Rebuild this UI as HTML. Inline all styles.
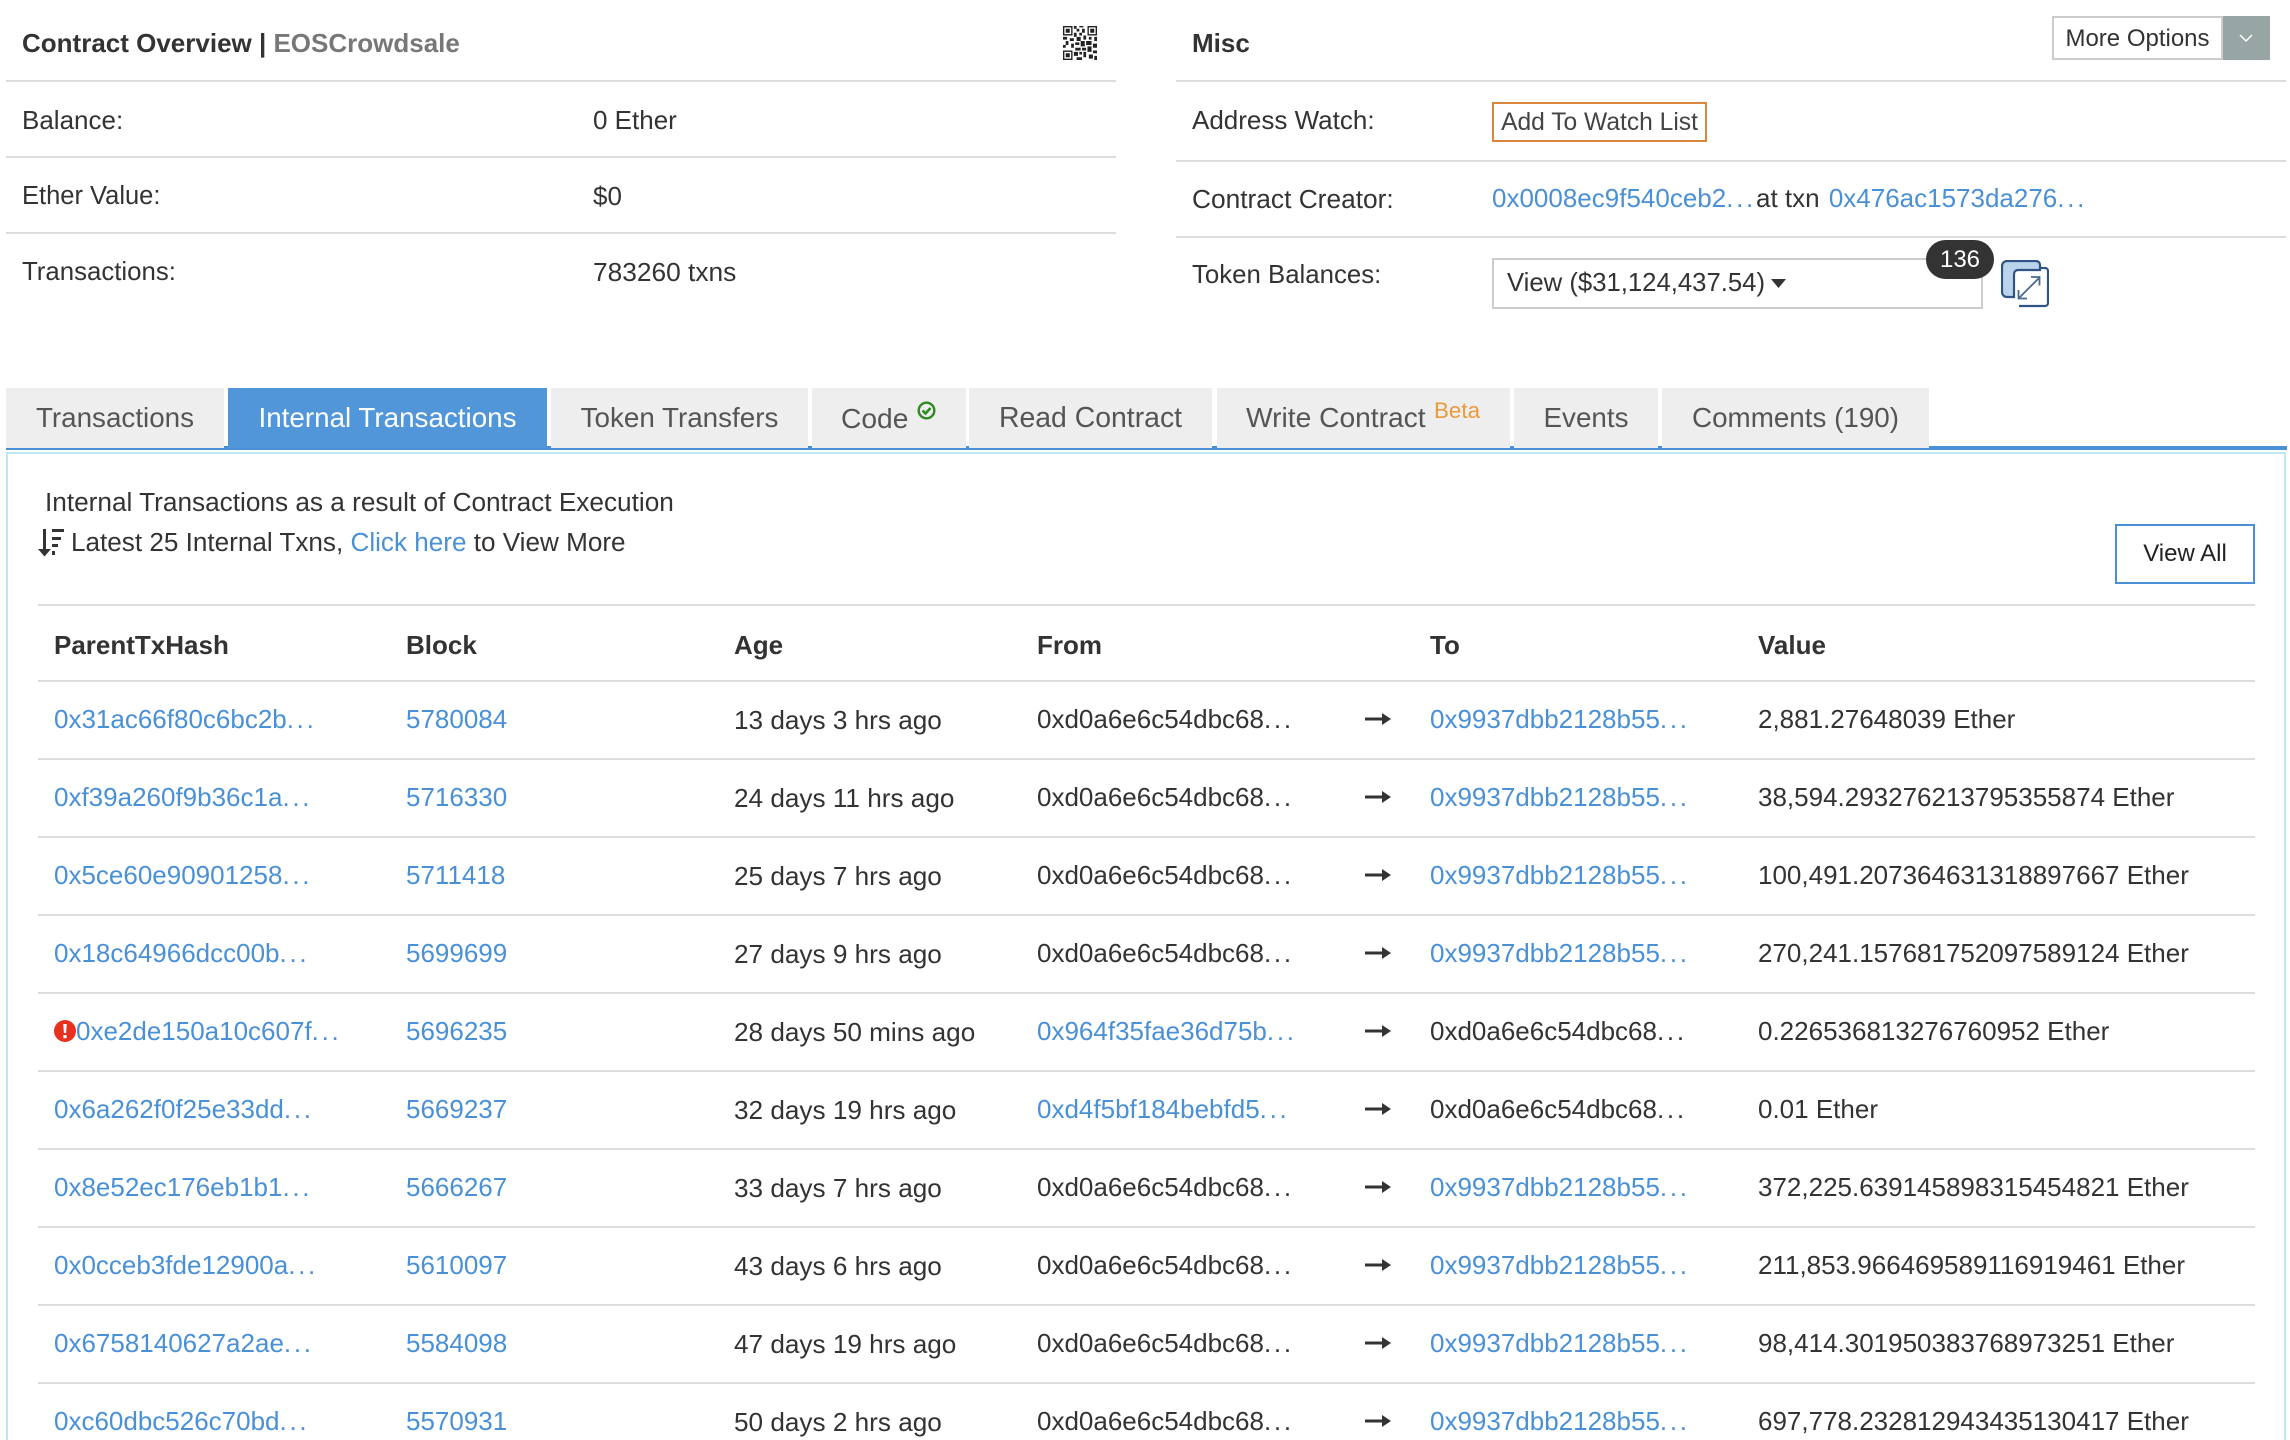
<!DOCTYPE html>
<html><head><meta charset="utf-8"><style>
html,body{margin:0;padding:0;background:#fff;height:1440px;overflow:hidden}
body{width:2290px;position:relative;font-family:"Liberation Sans",sans-serif;font-size:26px;color:#333}
.t,.r span,.r a{position:absolute;white-space:nowrap;line-height:30px}
a{color:#4a90d6;text-decoration:none}
i{font-style:normal;letter-spacing:2.7px}
.l{position:absolute;height:2px;background:#ddd}
.b{font-weight:bold}
.tab{position:absolute;top:388px;height:60px;background:#eee;color:#555;font-size:27.8px;line-height:60px;text-align:center;white-space:nowrap}
.r{position:absolute;left:0;width:2290px;height:78px}
.a{left:54px;top:24px}.k{left:406px;top:24px}.g{left:734px;top:25px;font-size:26.15px}.f{left:1037px;top:24px}.o{left:1430px;top:24px}.v{left:1758px;top:24px}
.r svg{position:absolute;left:1365px;top:31px}
.r .ln{position:absolute;left:38px;top:0;width:2217px;height:2px;background:#ddd}
</style></head><body>

<div class="t b" style="left:22px;top:28px">Contract Overview | <span style="color:#777">EOSCrowdsale</span></div>
<svg style="position:absolute;left:1063px;top:26px;filter:blur(.35px)" width="34" height="34" viewBox="0 0 25 25" fill="#222">
<path d="M0 0h7v7H0zM1 1v5h5V1zM2 2h3v3H2z" fill-rule="evenodd"/><path d="M18 0h7v7h-7zM19 1v5h5V1zM20 2h3v3h-3z" fill-rule="evenodd"/><path d="M0 18h7v7H0zM1 19v5h5v-5zM2 20h3v3H2z" fill-rule="evenodd"/>
<path d="M8 0h2v2H8zM12 0h3v1h-3zM10 2h2v2h-2zM14 2h2v3h-2zM8 5h2v3H8zM12 5h2v2h-2zM0 8h3v2H0zM5 9h3v2H5zM10 8h3v3h-3zM15 7h2v3h-2zM19 8h2v2h-2zM23 8h2v3h-2zM2 11h2v3H2zM0 14h2v2H0zM6 13h2v3H6zM9 12h3v2H9zM13 11h3v4h-3zM17 11h4v3h-4zM22 13h3v3h-3zM9 16h4v2H9zM14 16h3v2h-3zM18 15h3v4h-3zM8 19h3v3H8zM12 19h2v2h-2zM15 19h2v4h-2zM22 18h3v2h-3zM19 21h3v3h-3zM10 23h4v2h-4zM23 22h2v3h-2z"/></svg>
<div class="l" style="left:6px;top:80px;width:1110px"></div>
<div class="t" style="left:22px;top:105px">Balance:</div><div class="t" style="left:593px;top:105px">0 Ether</div>
<div class="l" style="left:6px;top:156px;width:1110px"></div>
<div class="t" style="left:22px;top:181px;font-size:25.5px">Ether Value:</div><div class="t" style="left:593px;top:181px">$0</div>
<div class="l" style="left:6px;top:232px;width:1110px"></div>
<div class="t" style="left:22px;top:257px;font-size:25.8px">Transactions:</div><div class="t" style="left:593px;top:257px;font-size:26.3px">783260 txns</div>

<div class="t b" style="left:1192px;top:28px">Misc</div>
<div style="position:absolute;left:2052px;top:16px;width:167px;height:40px;border:2px solid #ccc;font-size:24px;line-height:41px;text-align:center;white-space:nowrap">More Options</div>
<div style="position:absolute;left:2223px;top:16px;width:47px;height:44px;background:#98a5a5"></div>
<svg style="position:absolute;left:2239px;top:33px" width="14" height="10" viewBox="0 0 14 10"><path d="M1 2l6 6 6-6" fill="none" stroke="#fff" stroke-width="1.5"/></svg>
<div class="l" style="left:1176px;top:80px;width:1110px"></div>
<div class="t" style="left:1192px;top:105px">Address Watch:</div>
<div style="position:absolute;left:1492px;top:102px;width:211px;height:36px;border:2px solid #d9853c;font-size:24.6px;line-height:37px;text-align:center;white-space:nowrap;color:#444">Add To Watch List</div>
<div class="l" style="left:1176px;top:160px;width:1110px"></div>
<div class="t" style="left:1192px;top:184px;font-size:26.3px">Contract Creator:</div>
<div class="t" style="left:1492px;top:183px"><a>0x0008ec9f540ceb2<i>...</i></a>at txn <a style="margin-left:2px">0x476ac1573da276<i>...</i></a></div>
<div class="l" style="left:1176px;top:236px;width:1110px"></div>
<div class="t" style="left:1192px;top:260px;font-size:25.8px">Token Balances:</div>
<div style="position:absolute;left:1492px;top:258px;width:487px;height:47px;border:2px solid #ccc"></div>
<div class="t" style="left:1507px;top:268px;font-size:25.7px">View ($31,124,437.54)</div>
<svg style="position:absolute;left:1771px;top:279px" width="15" height="9"><path d="M0 0h15L7.5 9z" fill="#333"/></svg>
<div style="position:absolute;left:1926px;top:240px;width:68px;height:39px;border-radius:20px;background:#333;color:#fff;font-size:24px;line-height:39px;text-align:center">136</div>
<svg style="position:absolute;left:2001px;top:260px" width="48" height="48" viewBox="0 0 48 48">
<path d="M6 1h29a4 4 0 0 1 4 4v5H17a4 4 0 0 0-4 4v23H6a5 5 0 0 1-5-5V6a5 5 0 0 1 5-5z" fill="#bcd3ec" stroke="#2f5587" stroke-width="2.200"/>
<path d="M39 8h5a3 3 0 0 1 3 3v32a3 3 0 0 1-3 3H18" fill="none" stroke="#2f5587" stroke-width="2.200"/>
<path d="M18 38L38 18M30 17h8.500v8.500M17.500 30v8.500h8.500" fill="none" stroke="#4a6a90" stroke-width="1.800"/></svg>

<div style="position:absolute;left:6px;top:452px;width:2276px;height:986px;border:2px solid #bce8f1;border-bottom:0"></div>
<div style="position:absolute;left:6px;top:446px;width:2281px;height:4px;background:#4a90d6"></div>
<div class="tab" style="left:6px;width:218px">Transactions</div>
<div class="tab" style="left:228px;width:319px;background:#5096d8;color:#fff">Internal Transactions</div>
<div class="tab" style="left:551px;width:257px">Token Transfers</div>
<div class="tab" style="left:812px;width:154px;text-align:left;text-indent:29px;font-size:28.2px">Code</div>
<svg style="position:absolute;left:917px;top:401px" width="19" height="19" viewBox="0 0 19 19"><circle cx="9.500" cy="9.500" r="7.800" fill="none" stroke="#2f8a22" stroke-width="2.400"/><path d="M5.500 9.500l3 3 5-5.500" fill="none" stroke="#2f8a22" stroke-width="2.600"/></svg>
<div class="tab" style="left:969px;width:243px;font-size:28.4px">Read Contract</div>
<div class="tab" style="left:1217px;width:293px;text-align:left;text-indent:29px;font-size:28.2px;line-height:59px">Write Contract</div>
<div class="t" style="left:1434px;top:396px;font-size:22.4px;color:#e89a3c">Beta</div>
<div class="tab" style="left:1514px;width:144px">Events</div>
<div class="tab" style="left:1662px;width:267px">Comments (190)</div>

<div class="t" style="left:45px;top:487px;font-size:26.2px">Internal Transactions as a result of Contract Execution</div>
<svg style="position:absolute;left:38px;top:529px" width="27" height="28" viewBox="0 0 27 28" fill="#333"><path d="M5 0h3v20h5l-6.500 7.500L0 20h5z"/><path d="M14 0h12v3H14zM14 8h9v3h-9zM14 15h6v3h-6zM14 22h3v4h-3z"/></svg>
<div class="t" style="left:71px;top:527px;font-size:26.1px">Latest 25 Internal Txns, <a>Click here</a> to View More</div>
<div style="position:absolute;left:2115px;top:524px;width:136px;height:56px;border:2px solid #4a90d6;font-size:24px;line-height:56px;text-align:center;color:#222">View All</div>

<div class="l" style="left:38px;top:604px;width:2217px"></div>
<div class="t b" style="left:54px;top:630px">ParentTxHash</div>
<div class="t b" style="left:406px;top:630px">Block</div>
<div class="t b" style="left:734px;top:630px">Age</div>
<div class="t b" style="left:1037px;top:630px">From</div>
<div class="t b" style="left:1430px;top:630px">To</div>
<div class="t b" style="left:1758px;top:630px">Value</div>

<div class="r" style="top:680px"><div class="ln"></div><a class="a">0x31ac66f80c6bc2b<i>...</i></a><a class="k">5780084</a><span class="g">13 days 3 hrs ago</span><span class="f">0xd0a6e6c54dbc68<i>...</i></span><svg width="26" height="16" viewBox="0 0 26 16"><path d="M0 6.500h17V2l9 6-9 6V9.500H0z" fill="#333"/></svg><a class="o">0x9937dbb2128b55<i>...</i></a><span class="v">2,881.27648039 Ether</span></div>
<div class="r" style="top:758px"><div class="ln"></div><a class="a">0xf39a260f9b36c1a<i>...</i></a><a class="k">5716330</a><span class="g">24 days 11 hrs ago</span><span class="f">0xd0a6e6c54dbc68<i>...</i></span><svg width="26" height="16" viewBox="0 0 26 16"><path d="M0 6.500h17V2l9 6-9 6V9.500H0z" fill="#333"/></svg><a class="o">0x9937dbb2128b55<i>...</i></a><span class="v">38,594.293276213795355874 Ether</span></div>
<div class="r" style="top:836px"><div class="ln"></div><a class="a">0x5ce60e90901258<i>...</i></a><a class="k">5711418</a><span class="g">25 days 7 hrs ago</span><span class="f">0xd0a6e6c54dbc68<i>...</i></span><svg width="26" height="16" viewBox="0 0 26 16"><path d="M0 6.500h17V2l9 6-9 6V9.500H0z" fill="#333"/></svg><a class="o">0x9937dbb2128b55<i>...</i></a><span class="v">100,491.207364631318897667 Ether</span></div>
<div class="r" style="top:914px"><div class="ln"></div><a class="a">0x18c64966dcc00b<i>...</i></a><a class="k">5699699</a><span class="g">27 days 9 hrs ago</span><span class="f">0xd0a6e6c54dbc68<i>...</i></span><svg width="26" height="16" viewBox="0 0 26 16"><path d="M0 6.500h17V2l9 6-9 6V9.500H0z" fill="#333"/></svg><a class="o">0x9937dbb2128b55<i>...</i></a><span class="v">270,241.157681752097589124 Ether</span></div>
<div class="r" style="top:992px"><div class="ln"></div><svg style="left:54px;top:28px" width="22" height="22" viewBox="0 0 22 22"><circle cx="11" cy="11" r="11" fill="#e8301f"/><path d="M9.300 4h3.400l-.6 9H9.900zM9.400 15h3.200v3.200H9.400z" fill="#fff"/></svg><a class="a" style="left:76px">0xe2de150a10c607f<i>...</i></a><a class="k">5696235</a><span class="g">28 days 50 mins ago</span><a class="f">0x964f35fae36d75b<i>...</i></a><svg width="26" height="16" viewBox="0 0 26 16"><path d="M0 6.500h17V2l9 6-9 6V9.500H0z" fill="#333"/></svg><span class="o">0xd0a6e6c54dbc68<i>...</i></span><span class="v">0.226536813276760952 Ether</span></div>
<div class="r" style="top:1070px"><div class="ln"></div><a class="a">0x6a262f0f25e33dd<i>...</i></a><a class="k">5669237</a><span class="g">32 days 19 hrs ago</span><a class="f">0xd4f5bf184bebfd5<i>...</i></a><svg width="26" height="16" viewBox="0 0 26 16"><path d="M0 6.500h17V2l9 6-9 6V9.500H0z" fill="#333"/></svg><span class="o">0xd0a6e6c54dbc68<i>...</i></span><span class="v">0.01 Ether</span></div>
<div class="r" style="top:1148px"><div class="ln"></div><a class="a">0x8e52ec176eb1b1<i>...</i></a><a class="k">5666267</a><span class="g">33 days 7 hrs ago</span><span class="f">0xd0a6e6c54dbc68<i>...</i></span><svg width="26" height="16" viewBox="0 0 26 16"><path d="M0 6.500h17V2l9 6-9 6V9.500H0z" fill="#333"/></svg><a class="o">0x9937dbb2128b55<i>...</i></a><span class="v">372,225.639145898315454821 Ether</span></div>
<div class="r" style="top:1226px"><div class="ln"></div><a class="a">0x0cceb3fde12900a<i>...</i></a><a class="k">5610097</a><span class="g">43 days 6 hrs ago</span><span class="f">0xd0a6e6c54dbc68<i>...</i></span><svg width="26" height="16" viewBox="0 0 26 16"><path d="M0 6.500h17V2l9 6-9 6V9.500H0z" fill="#333"/></svg><a class="o">0x9937dbb2128b55<i>...</i></a><span class="v">211,853.966469589116919461 Ether</span></div>
<div class="r" style="top:1304px"><div class="ln"></div><a class="a">0x6758140627a2ae<i>...</i></a><a class="k">5584098</a><span class="g">47 days 19 hrs ago</span><span class="f">0xd0a6e6c54dbc68<i>...</i></span><svg width="26" height="16" viewBox="0 0 26 16"><path d="M0 6.500h17V2l9 6-9 6V9.500H0z" fill="#333"/></svg><a class="o">0x9937dbb2128b55<i>...</i></a><span class="v">98,414.301950383768973251 Ether</span></div>
<div class="r" style="top:1382px;height:58px"><div class="ln"></div><a class="a">0xc60dbc526c70bd<i>...</i></a><a class="k">5570931</a><span class="g">50 days 2 hrs ago</span><span class="f">0xd0a6e6c54dbc68<i>...</i></span><svg width="26" height="16" viewBox="0 0 26 16"><path d="M0 6.500h17V2l9 6-9 6V9.500H0z" fill="#333"/></svg><a class="o">0x9937dbb2128b55<i>...</i></a><span class="v">697,778.232812943435130417 Ether</span></div>
</body></html>
